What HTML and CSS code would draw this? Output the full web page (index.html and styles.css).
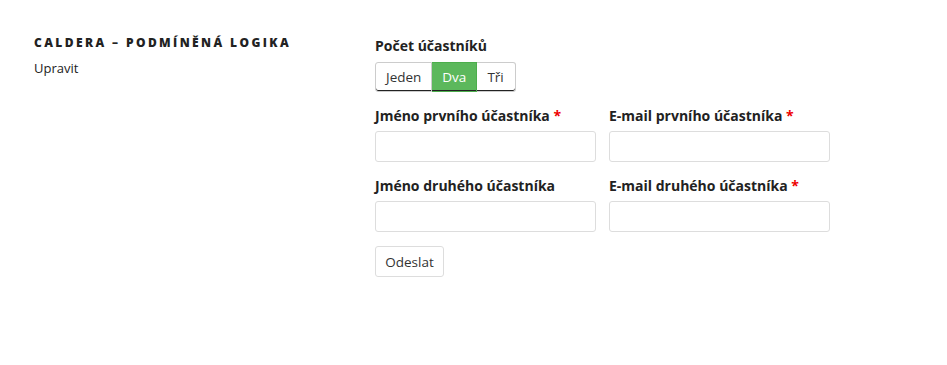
FILE: index.html
```html
<!DOCTYPE html>
<html lang="cs">

<head>
    <meta charset="utf-8">
    <title>Caldera – Podmíněná logika</title>
    <link rel="stylesheet" href="styles.css">
</head>

<body>

    <div class="page">
        <aside class="sidebar">
            <h2 class="widget-title">Caldera – Podmíněná logika</h2>
            <a class="edit-link" href="#">Upravit</a>
        </aside>

        <form class="caldera-form" action="#">
            <div class="field">
                <label class="field-label">Počet účastníků</label>
                <div class="toggle-group">
                    <a href="#" class="toggle">Jeden</a>
                    <a href="#" class="toggle toggle-active">Dva</a>
                    <a href="#" class="toggle">Tři</a>
                </div>
            </div>

            <div class="field-row">
                <div class="field">
                    <label class="field-label" for="name1">Jméno prvního účastníka <span class="req">*</span></label>
                    <input type="text" id="name1" class="text-input">
                </div>
                <div class="field">
                    <label class="field-label" for="mail1">E-mail prvního účastníka <span class="req">*</span></label>
                    <input type="email" id="mail1" class="text-input">
                </div>
            </div>

            <div class="field-row">
                <div class="field">
                    <label class="field-label" for="name2">Jméno druhého účastníka</label>
                    <input type="text" id="name2" class="text-input">
                </div>
                <div class="field">
                    <label class="field-label" for="mail2">E-mail druhého účastníka <span class="req">*</span></label>
                    <input type="email" id="mail2" class="text-input">
                </div>
            </div>

            <div class="submit-row">
                <button type="submit" class="submit-btn">Odeslat</button>
            </div>
        </form>
    </div>

</body>

</html>
```

FILE: styles.css
```css
* {
    margin: 0;
    padding: 0;
    box-sizing: border-box;
}

body {
    font-family: "Open Sans", "Liberation Sans", sans-serif;
    font-size: 14px;
    color: #222;
    background-color: #fff;
}

.page {
    display: flex;
    padding: 33px 0 0 34px;
}

/** Sidebar widget **/
.sidebar {
    width: 341px;
    flex-shrink: 0;
}

.widget-title {
    font-size: 12px;
    font-weight: 800;
    line-height: 20px;
    letter-spacing: 0.2em;
    text-transform: uppercase;
    color: #222;
}

.edit-link {
    display: block;
    margin-top: 4px;
    font-size: 13px;
    line-height: 22px;
    color: #222;
    text-decoration: none;
}

/** Form **/
.caldera-form {
    display: flex;
    flex-direction: column;
    gap: 14px;
    padding-top: 3px;
}

.field-row {
    display: flex;
    gap: 13px;
}

.field {
    display: flex;
    flex-direction: column;
    gap: 5px;
}

.field-label {
    font-weight: 700;
    line-height: 20px;
    color: #222;
}

.req {
    color: #e00;
}

.toggle-group {
    display: flex;
    margin-top: 1px;
}

.toggle {
    display: block;
    height: 30px;
    padding: 0 10px;
    line-height: 28px;
    font-size: 13.5px;
    color: #333;
    text-decoration: none;
    background: #fff;
    border: 1px solid #ccc;
    box-shadow: inset 0 -1px 0 #222;
}

.toggle:first-child {
    border-radius: 3px 0 0 3px;
}

.toggle:last-child {
    border-radius: 0 3px 3px 0;
    padding-right: 11px;
}

.toggle + .toggle {
    border-left: 0;
}

.toggle-active {
    background: #5cb85c;
    border-color: #4cae4c;
    color: #fff;
}

.text-input {
    width: 221px;
    height: 31px;
    border: 1px solid #ddd;
    border-radius: 3px;
    background: #fff;
    font-family: inherit;
}

.submit-btn {
    width: 69px;
    height: 31px;
    font-family: inherit;
    font-size: 13.5px;
    color: #333;
    background: #fff;
    border: 1px solid #ddd;
    border-radius: 3px;
}
```
